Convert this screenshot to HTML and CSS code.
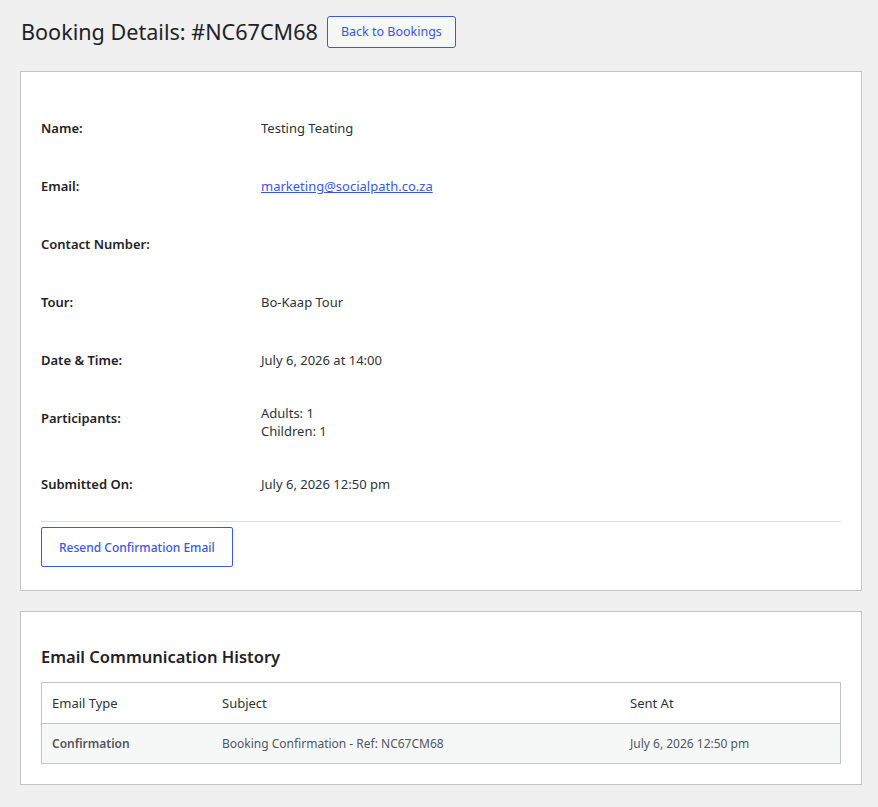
FILE: index.html
```html
<!DOCTYPE html>
<html lang="en">
<head>
    <meta charset="UTF-8">
    <meta name="viewport" content="width=device-width, initial-scale=1.0">
    <title>Booking Details</title>
    <link rel="stylesheet" href="styles.css">
</head>
<body>

<div class="wrap">
    <div class="page-header">
        <h1>Booking Details: #NC67CM68</h1>
        <a href="#" class="page-title-action">Back to Bookings</a>
    </div>

    <!-- Booking info -->
    <div class="card">
        <table class="form-table">
            <tr>
                <th>Name:</th>
                <td>Testing Teating</td>
            </tr>
            <tr>
                <th>Email:</th>
                <td><a href="#">marketing@socialpath.co.za</a></td>
            </tr>
            <tr>
                <th>Contact Number:</th>
                <td></td>
            </tr>
            <tr>
                <th>Tour:</th>
                <td>Bo-Kaap Tour</td>
            </tr>
            <tr>
                <th>Date &amp; Time:</th>
                <td>July 6, 2026 at 14:00</td>
            </tr>
            <tr>
                <th>Participants:</th>
                <td>Adults: 1<br>Children: 1</td>
            </tr>
            <tr>
                <th>Submitted On:</th>
                <td>July 6, 2026 12:50 pm</td>
            </tr>
        </table>
        <hr>
        <div class="actions">
            <button type="button" class="button button-large">Resend Confirmation Email</button>
        </div>
    </div>

    <!-- Email log -->
    <div class="card card-history">
        <h2>Email Communication History</h2>
        <table class="widefat">
            <thead>
                <tr>
                    <th class="col-type">Email Type</th>
                    <th>Subject</th>
                    <th class="col-sent">Sent At</th>
                </tr>
            </thead>
            <tbody>
                <tr>
                    <td><strong>Confirmation</strong></td>
                    <td>Booking Confirmation - Ref: NC67CM68</td>
                    <td>July 6, 2026 12:50 pm</td>
                </tr>
            </tbody>
        </table>
    </div>
</div>

</body>
</html>
```

FILE: styles.css
```css
body {
    margin: 0;
    background: #f0f0f1;
    color: #1d2327;
    font-family: "Noto Sans", "Open Sans", sans-serif;
    font-size: 13px;
    line-height: 1.3;
}
.wrap {
    padding: 16px 16px 0 20px;
}
.page-header {
    display: flex;
    align-items: center;
    gap: 9px;
    height: 32px;
}
h1 {
    margin: 0 0 0 1px;
    font-size: 21.6px;
    font-weight: 400;
    line-height: 30px;
    color: #1d2327;
}
.page-title-action {
    display: inline-block;
    height: 30px;
    line-height: 30px;
    padding: 0 13px;
    border: 1px solid #3858e9;
    border-radius: 3px;
    background: #f6f7f7;
    color: #3858e9;
    font-size: 12.5px;
    text-decoration: none;
}
.card {
    background: #fff;
    border: 1px solid #c3c4c7;
    margin-top: 23px;
    padding: 27px 20px 23px;
}
.form-table {
    width: 100%;
    border-collapse: collapse;
}
.form-table th {
    width: 200px;
    padding: 20px 10px 20px 0;
    text-align: left;
    vertical-align: top;
    font-weight: 600;
    line-height: 18px;
    color: #1d2327;
}
.form-table td {
    padding: 15px 10px;
    vertical-align: middle;
    color: #2c3338;
    line-height: 18px;
}
.form-table a {
    color: #3858e9;
}
hr {
    margin: 8px 0 5px;
    border: 0;
    border-top: 1px solid #dcdcde;
}
.button {
    height: 40px;
    padding: 0 17px;
    border: 1px solid #3858e9;
    border-radius: 2px;
    background: #fff;
    color: #3858e9;
    font-family: inherit;
    font-size: 12px;
    font-weight: 500;
    cursor: pointer;
}
.card-history {
    margin-top: 20px;
    padding: 19px 20px 20px;
}
h2 {
    margin: 15px 0 14px;
    font-size: 16.5px;
    font-weight: 600;
    line-height: 22px;
    color: #1d2327;
}
.widefat {
    width: 100%;
    border: 1px solid #c3c4c7;
    border-collapse: collapse;
    font-size: 12px;
}
.widefat th {
    height: 40px;
    padding: 0 10px;
    text-align: left;
    font-weight: 400;
    font-size: 13px;
    color: #2c3338;
    border-bottom: 1px solid #c3c4c7;
}
.widefat td {
    height: 39px;
    padding: 0 10px;
    background: #f6f7f7;
    color: #50575e;
}
.widefat strong {
    font-weight: 600;
}
.col-type {
    width: 150px;
}
.col-sent {
    width: 200px;
}
```
